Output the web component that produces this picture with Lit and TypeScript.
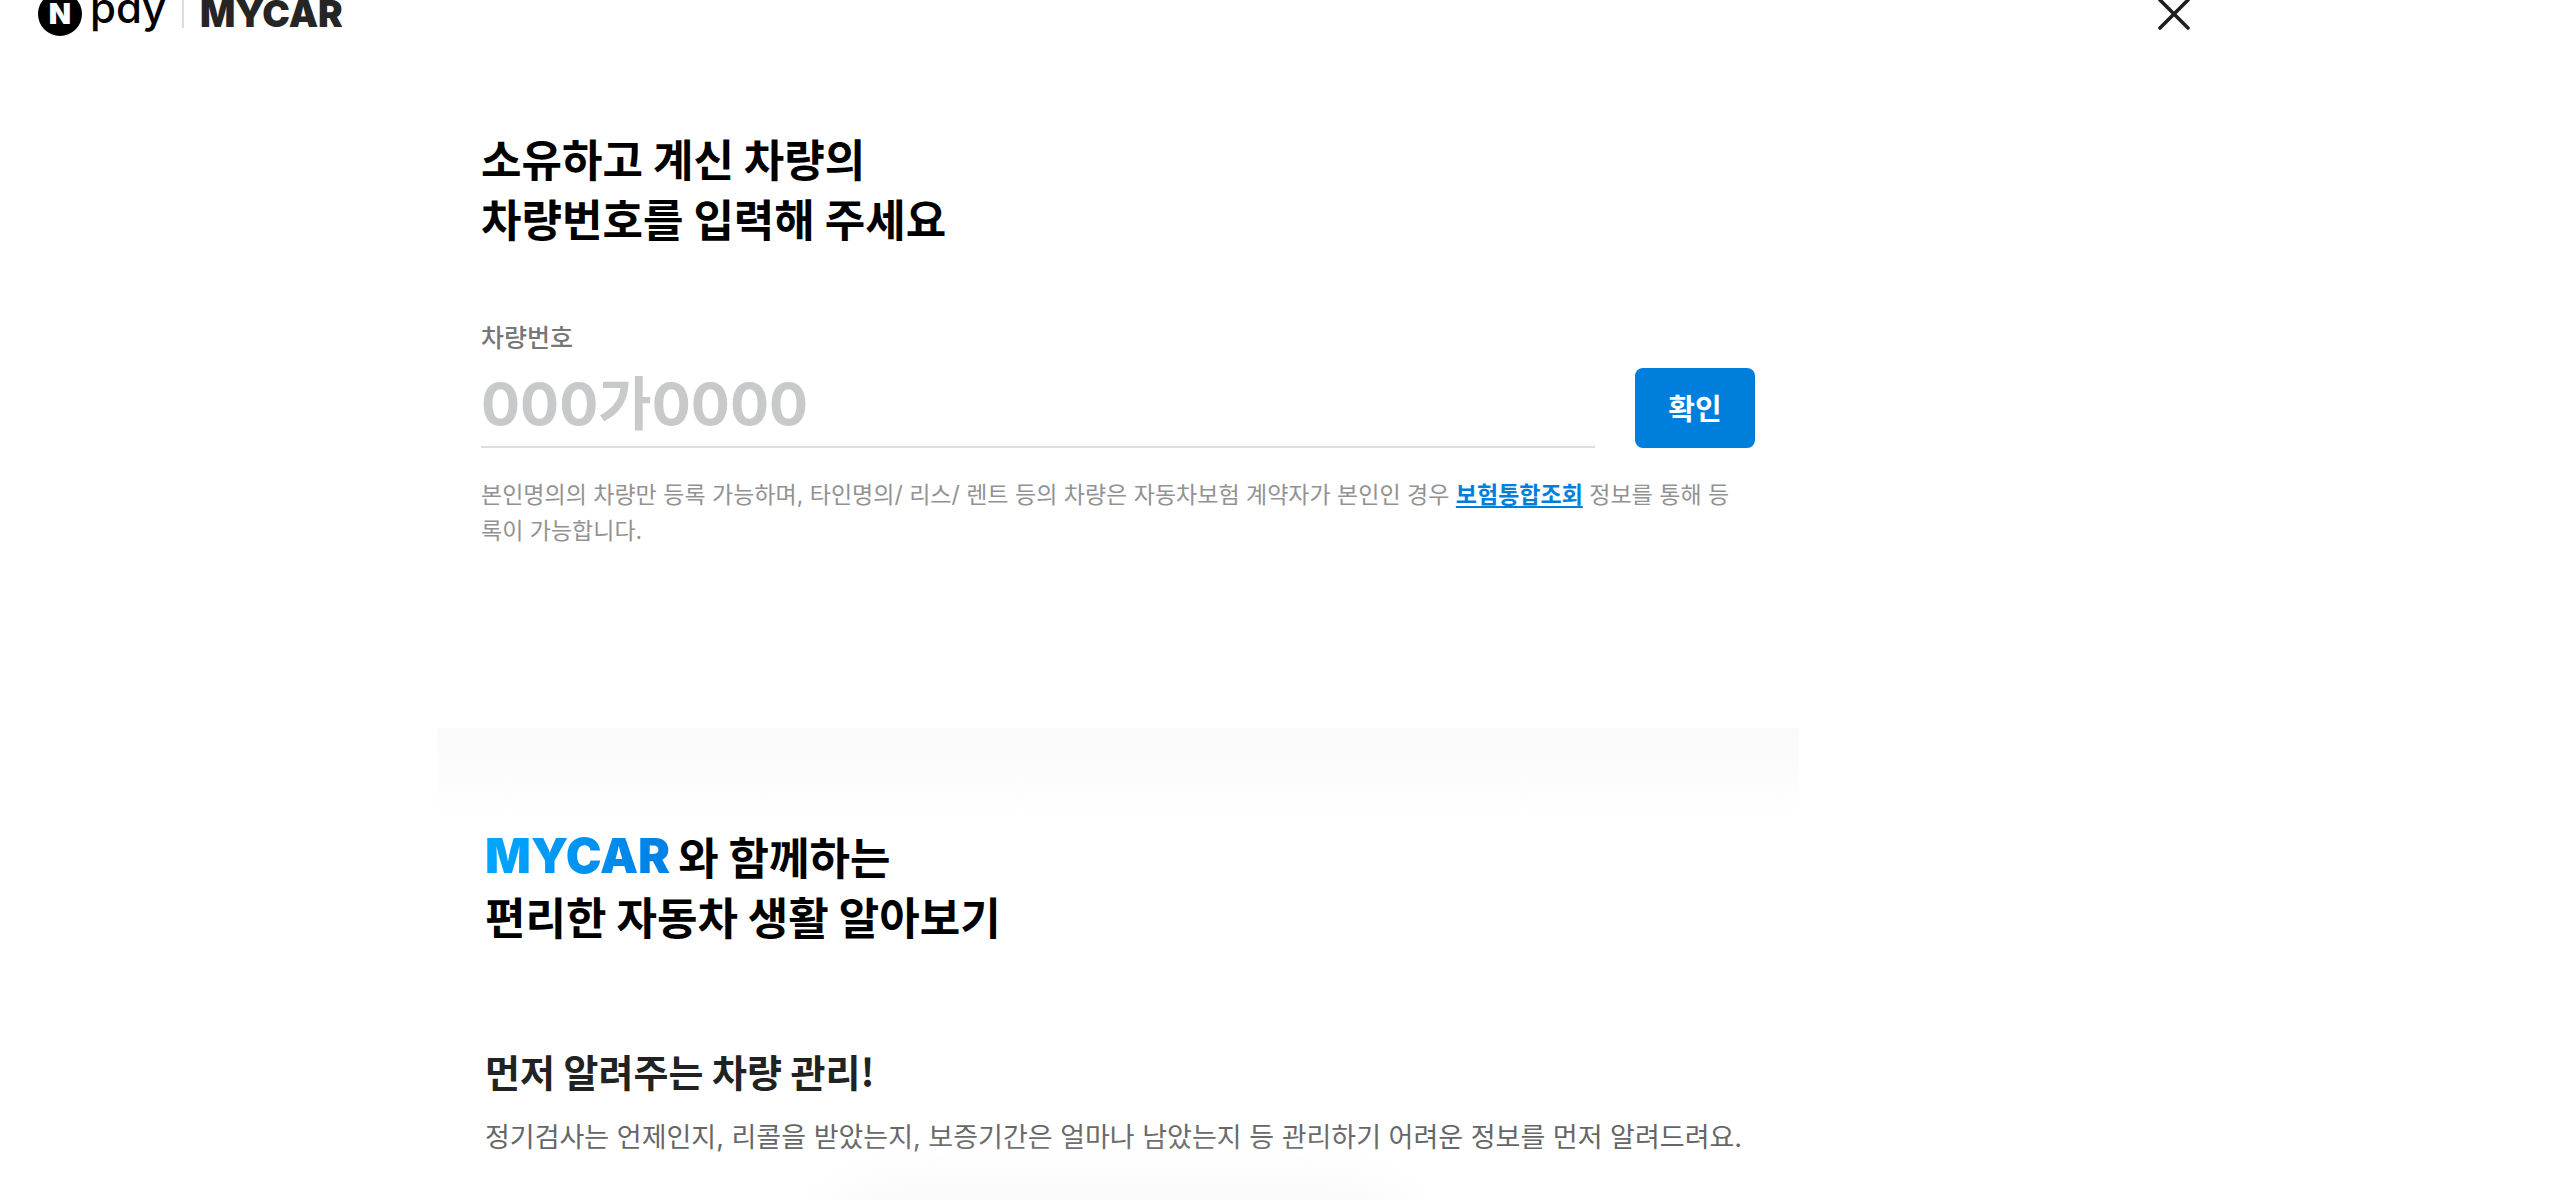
import { LitElement, html, css } from "lit";
import { customElement, state } from "lit/decorators.js";

@customElement("app-root")
export class AppRoot extends LitElement {
  static styles = css`
    :host {
      display: block;
      min-height: 100vh;
      overflow: hidden;
      background: #fff;
      color: #000;
      font-family: "Noto Sans CJK KR", sans-serif;
    }
    * {
      box-sizing: border-box;
    }
    h1,
    h2,
    h3,
    p {
      margin: 0;
    }
    .page {
      max-width: 2236px;
      height: 100vh;
      overflow: hidden;
    }
    .header {
      display: flex;
      align-items: center;
      justify-content: space-between;
      height: 72px;
      margin-top: -22px;
      padding: 0 44px 0 38px;
    }
    .brand {
      display: flex;
      align-items: center;
      color: #000;
      text-decoration: none;
      font-family: Inter, sans-serif;
      line-height: 44px;
    }
    .badge {
      display: flex;
      align-items: center;
      justify-content: center;
      width: 44px;
      height: 44px;
      border-radius: 50%;
      background: #000;
      color: #fff;
      font-size: 29px;
      font-weight: 900;
    }
    .pay {
      margin-left: 8px;
      padding-bottom: 12px;
      font-size: 42px;
      font-weight: 500;
      font-feature-settings: "cv11";
    }
    .divider {
      width: 2px;
      height: 28px;
      margin: 0 16px;
      background: #ddd;
    }
    .mycar {
      font-family: Inter, sans-serif;
      font-size: 37px;
      font-weight: 900;
      color: #252525;
    }
    .close {
      display: flex;
      padding: 0;
      border: 0;
      background: none;
      cursor: pointer;
    }
    .content {
      max-width: 1362px;
      margin: 0 auto;
    }
    .register {
      padding: 78px 44px 180px;
    }
    .title {
      font-size: 44px;
      font-weight: 700;
      line-height: 60px;
    }
    .label {
      display: block;
      margin-top: 70px;
      font-size: 25px;
      font-weight: 500;
      line-height: 36px;
      color: #777;
    }
    .row {
      display: flex;
      gap: 40px;
      margin-top: 14px;
    }
    .plate {
      flex: 1;
      min-width: 0;
      height: 80px;
      padding: 0 0 6px;
      border: 0;
      border-bottom: 2px solid #ddd;
      border-radius: 0;
      outline: none;
      background: none;
      color: #222;
      font-family: Inter, "Noto Sans CJK KR", sans-serif;
      font-size: 58px;
      font-weight: 700;
    }
    .plate::placeholder {
      color: #c8c9cb;
      opacity: 1;
    }
    .submit {
      width: 120px;
      height: 80px;
      padding: 0 0 2px;
      border: 0;
      border-radius: 8px;
      background: #007edb;
      color: #fff;
      font-family: inherit;
      font-size: 29px;
      font-weight: 700;
      cursor: pointer;
    }
    .note,
    .desc {
      font-family: Inter, "Noto Sans CJK KR", sans-serif;
    }
    .note {
      margin-top: 29px;
      padding-right: 12px;
      font-size: 23px;
      line-height: 36px;
      color: #929292;
    }
    .link {
      color: #007edb;
      font-weight: 700;
      text-underline-offset: 3px;
      text-decoration-thickness: 2px;
    }
    .intro {
      padding: 98px 48px 0;
      background: linear-gradient(#fafafa, #fff 96px);
    }
    .register + .intro {
      margin-top: -1px;
    }
    .heading {
      display: flex;
      align-items: center;
      gap: 8px;
    }
    .accent {
      font-family: Inter, sans-serif;
      font-size: 48px;
      font-weight: 900;
      background: linear-gradient(100deg, #00a8ff, #007ee4);
      background-clip: text;
      -webkit-background-clip: text;
      color: transparent;
    }
    .subtitle {
      margin-top: 97px;
      font-size: 38px;
      font-weight: 700;
      line-height: 56px;
      color: #222;
    }
    .desc {
      margin-top: 19px;
      font-size: 27px;
      line-height: 40px;
      color: #666;
    }
    .glow {
      width: 600px;
      height: 200px;
      margin: 26px auto 0;
      border-radius: 80px;
      background: #f9f9f9;
      filter: blur(28px);
    }
  `;

  @state() private plate = "";

  render() {
    return html`
      <div class="page">
        <header class="header">
          <a class="brand" href="#">
            <span class="badge">N</span>
            <span class="pay">pay</span>
            <span class="divider"></span>
            <span class="mycar">MYCAR</span>
          </a>
          <button class="close" type="button" aria-label="닫기">
            <svg width="36" height="36" viewBox="0 0 36 36" fill="none" stroke="#1e1e20" stroke-width="3.6" stroke-linecap="round">
              <path d="M4 4L32 32M32 4L4 32" />
            </svg>
          </button>
        </header>
        <main class="content">
          <form class="register" @submit=${(e: Event) => e.preventDefault()}>
            <h1 class="title">소유하고 계신 차량의<br />차량번호를 입력해 주세요</h1>
            <label class="label" for="plate">차량번호</label>
            <div class="row">
              <input
                class="plate"
                id="plate"
                type="text"
                placeholder="000가0000"
                .value=${this.plate}
                @input=${(e: Event) => (this.plate = (e.target as HTMLInputElement).value)}
              />
              <button class="submit" type="submit">확인</button>
            </div>
            <p class="note">본인명의의 차량만 등록 가능하며, 타인명의/ 리스/ 렌트 등의 차량은 자동차보험 계약자가 본인인 경우 <a class="link" href="#">보험통합조회</a> 정보를 통해 등록이 가능합니다.</p>
          </form>
          <section class="intro">
            <h2 class="title">
              <span class="heading"><span class="accent">MYCAR</span><span>와 함께하는</span></span>
              편리한 자동차 생활 알아보기
            </h2>
            <h3 class="subtitle">먼저 알려주는 차량 관리!</h3>
            <p class="desc">정기검사는 언제인지, 리콜을 받았는지, 보증기간은 얼마나 남았는지 등 관리하기 어려운 정보를 먼저 알려드려요.</p>
            <div class="glow"></div>
          </section>
        </main>
      </div>
    `;
  }
}
